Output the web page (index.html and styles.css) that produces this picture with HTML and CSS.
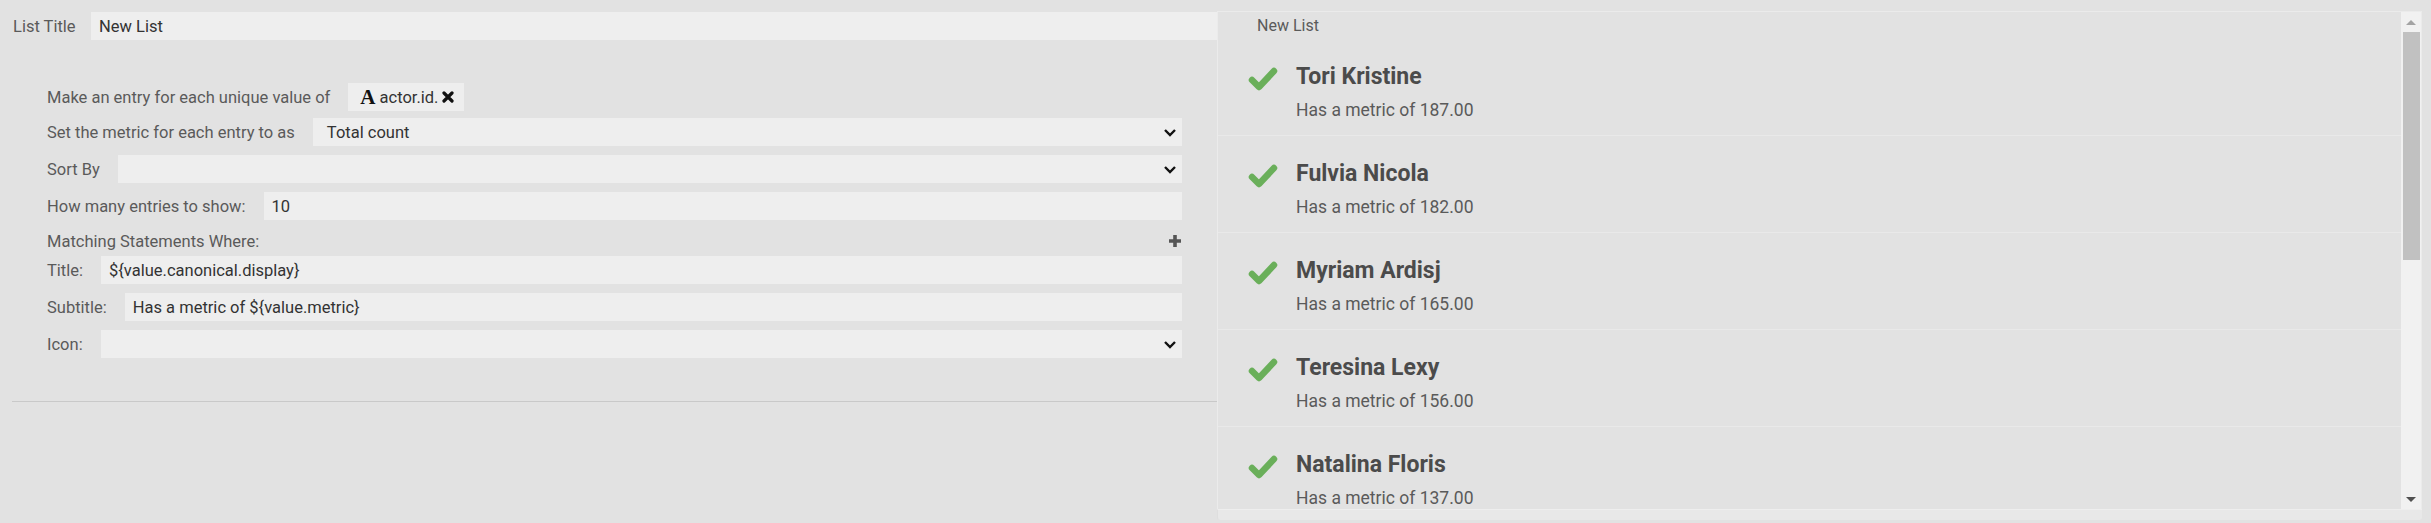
FILE: index.html
```html
<!DOCTYPE html>
<html lang="en">
<head>
  <meta charset="UTF-8" />
  <title>List Widget Editor</title>
  <link rel="stylesheet" href="styles.css">
</head>
<body>
  <div class="page">
    <div class="editor">
      <div class="title-row">
        <label for="listTitle">List Title</label>
        <input type="text" id="listTitle" value="New List" />
      </div>

      <div class="options">
        <div class="row first">
          <span class="label">Make an entry for each unique value of</span>
          <span class="chip">
            <span class="chip-type">A</span>
            <span class="chip-text">actor.id.</span>
            <svg class="chip-remove" viewBox="0 0 12 12"><path d="M2 2L10 10M10 2L2 10" /></svg>
          </span>
        </div>

        <div class="row">
          <span class="label">Set the metric for each entry to as</span>
          <div class="select"><span>Total count</span><svg class="chevron" viewBox="0 0 14 9"><polyline points="2,2 7,7 12,2" /></svg></div>
        </div>

        <div class="row">
          <span class="label">Sort By</span>
          <div class="select"><span></span><svg class="chevron" viewBox="0 0 14 9"><polyline points="2,2 7,7 12,2" /></svg></div>
        </div>

        <div class="row">
          <span class="label">How many entries to show:</span>
          <input type="text" value="10" />
        </div>

        <div class="row matching">
          <span class="label">Matching Statements Where:</span>
          <svg class="plus" viewBox="0 0 14 14"><path d="M7 1V13M1 7H13" /></svg>
        </div>

        <div class="row">
          <span class="label">Title:</span>
          <input type="text" value="${value.canonical.display}" />
        </div>

        <div class="row">
          <span class="label">Subtitle:</span>
          <input type="text" value="Has a metric of ${value.metric}" />
        </div>

        <div class="row">
          <span class="label">Icon:</span>
          <div class="select"><span></span><svg class="chevron" viewBox="0 0 14 9"><polyline points="2,2 7,7 12,2" /></svg></div>
        </div>
      </div>

      <hr class="divider">
    </div>

    <div class="preview">
      <div class="preview-box">
        <div class="preview-content">
          <div class="preview-head">New List</div>
          <ul class="entries">
            <li class="entry">
              <svg class="check" viewBox="0 0 32 26"><polyline points="5,14 12,21 27,5" /></svg>
              <div>
                <div class="entry-title">Tori Kristine</div>
                <div class="entry-sub">Has a metric of 187.00</div>
              </div>
            </li>
            <li class="entry">
              <svg class="check" viewBox="0 0 32 26"><polyline points="5,14 12,21 27,5" /></svg>
              <div>
                <div class="entry-title">Fulvia Nicola</div>
                <div class="entry-sub">Has a metric of 182.00</div>
              </div>
            </li>
            <li class="entry">
              <svg class="check" viewBox="0 0 32 26"><polyline points="5,14 12,21 27,5" /></svg>
              <div>
                <div class="entry-title">Myriam Ardisj</div>
                <div class="entry-sub">Has a metric of 165.00</div>
              </div>
            </li>
            <li class="entry">
              <svg class="check" viewBox="0 0 32 26"><polyline points="5,14 12,21 27,5" /></svg>
              <div>
                <div class="entry-title">Teresina Lexy</div>
                <div class="entry-sub">Has a metric of 156.00</div>
              </div>
            </li>
            <li class="entry">
              <svg class="check" viewBox="0 0 32 26"><polyline points="5,14 12,21 27,5" /></svg>
              <div>
                <div class="entry-title">Natalina Floris</div>
                <div class="entry-sub">Has a metric of 137.00</div>
              </div>
            </li>
          </ul>
        </div>
        <div class="scrollbar">
          <span class="arrow up"></span>
          <div class="track"><div class="thumb"></div></div>
          <span class="arrow down"></span>
        </div>
      </div>
      <div class="preview-foot"></div>
    </div>
  </div>
</body>
</html>
```

FILE: styles.css
```css
body {
  margin: 0;
  background: #e2e2e2;
  font-family: Roboto, "Liberation Sans", sans-serif;
  font-size: 16.5px;
  color: #5a5a5a;
}
.page {
  display: grid;
  grid-template-columns: 1205px 1205px;
  padding: 11px 9px 0 12px;
  height: 512px;
}

/* editor column */
.editor {
  padding-top: 1px;
}
.title-row {
  display: flex;
  align-items: center;
  height: 28px;
}
.title-row label {
  width: 79px;
  padding-left: 1px;
  box-sizing: border-box;
}
input {
  flex: 1;
  height: 28px;
  box-sizing: border-box;
  border: none;
  background: #eeeeee;
  padding: 0 8px;
  font-family: inherit;
  font-size: 16.5px;
  color: #333;
  outline: none;
}
.options {
  margin-top: 43px;
  padding: 0 35px;
}
.row {
  display: flex;
  align-items: center;
  height: 28px;
  margin-bottom: 9px;
}
.row.first {
  margin-bottom: 7px;
}
.row .label {
  margin-right: 18px;
  white-space: nowrap;
}
.chip {
  display: flex;
  align-items: center;
  height: 28px;
  padding: 0 10px 0 12px;
  background: #eeeeee;
  color: #333;
}
.chip-type {
  font-family: "Liberation Serif", serif;
  font-weight: bold;
  font-size: 21px;
  color: #111;
  margin-right: 4px;
}
.chip-remove {
  width: 12px;
  height: 12px;
  margin-left: 4px;
  stroke: #111;
  stroke-width: 3.2;
  stroke-linecap: round;
}
.select {
  flex: 1;
  display: flex;
  align-items: center;
  justify-content: space-between;
  height: 28px;
  background: #eeeeee;
  padding: 0 5px 0 14px;
  color: #333;
}
.chevron {
  width: 14px;
  height: 9px;
  fill: none;
  stroke: #111;
  stroke-width: 2.4;
}
.row.matching {
  height: 27px;
  margin-bottom: 0;
  justify-content: space-between;
  padding-bottom: 3px;
  box-sizing: border-box;
}
.plus {
  width: 14px;
  height: 14px;
  stroke: #555;
  stroke-width: 3.6;
}
.divider {
  border: none;
  border-top: 1px solid #c9c9c9;
  margin: 43px 0 0 0;
}

/* preview column */
.preview-box {
  display: flex;
  height: 497px;
  border: 1px solid #ebebeb;
  border-bottom: none;
}
.preview-content {
  flex: 1;
  overflow: hidden;
}
.preview-head {
  height: 27px;
  line-height: 27px;
  padding-left: 39px;
  font-size: 16px;
}
.entries {
  list-style: none;
  margin: 0;
  padding: 0;
}
.entry {
  display: flex;
  align-items: flex-start;
  padding: 24px 0 0 29px;
  box-sizing: border-box;
  border-bottom: 1px solid #e9e9e9;
  height: 97px;
}
.check {
  width: 32px;
  height: 26px;
  margin: 3px 17px 0 0;
  fill: none;
  stroke: #6aaf5a;
  stroke-width: 6.5;
  stroke-linecap: round;
  stroke-linejoin: round;
}
.entry-title {
  height: 28px;
  line-height: 28px;
  font-size: 23px;
  font-weight: bold;
  color: #4b4b4b;
}
.entry-sub {
  margin-top: 8px;
  line-height: 22px;
  font-size: 17.5px;
  color: #5a5a5a;
}
.scrollbar {
  width: 20px;
  display: flex;
  flex-direction: column;
  background: #f1f1f1;
}
.arrow {
  height: 20px;
  display: flex;
  align-items: center;
  justify-content: center;
}
.arrow::before {
  content: "";
  border-left: 5px solid transparent;
  border-right: 5px solid transparent;
}
.arrow.up::before {
  border-bottom: 5px solid #a3a3a3;
}
.arrow.down::before {
  border-top: 5px solid #505050;
}
.track {
  flex: 1;
}
.thumb {
  height: 228px;
  margin: 0 1px 0 2px;
  background: #c1c1c1;
}
.preview-foot {
  height: 10px;
  background: #e8e8e8;
  border-top: 1px solid #eeeeee;
  border-left: 1px solid #dedede;
  border-radius: 0 0 3px 3px;
}
```
